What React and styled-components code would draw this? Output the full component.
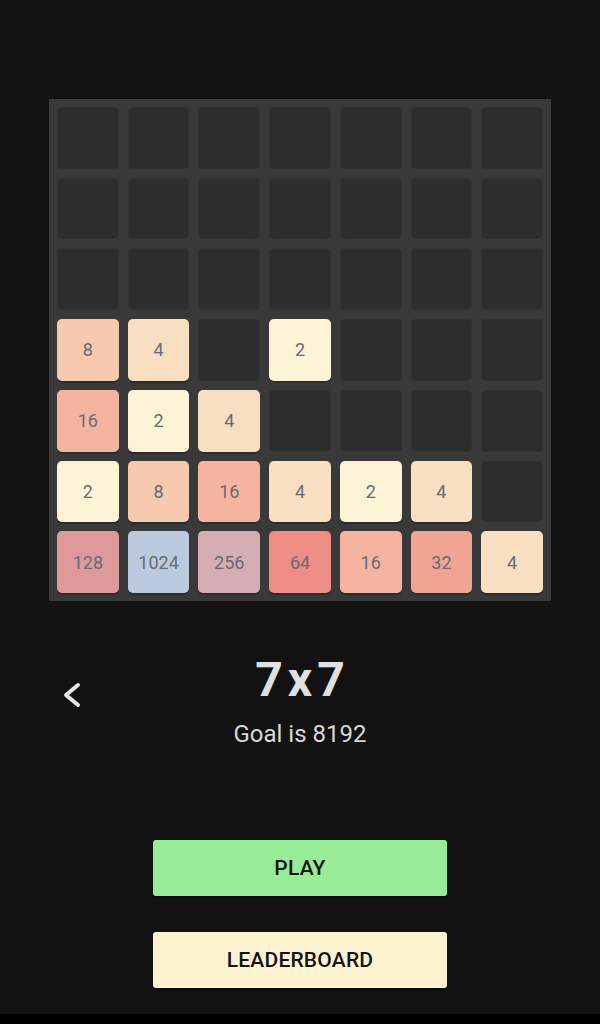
import styled, { createGlobalStyle } from 'styled-components';

const GlobalStyle = createGlobalStyle`
  html, body {
    margin: 0;
    padding: 0;
    background-color: #121212;
  }
  body {
    font-family: Roboto, 'Noto Sans', sans-serif;
  }
`;

const TILE_COLORS = {
  2: '#fcf4d4',
  4: '#f9dfc1',
  8: '#f7c9ae',
  16: '#f4b4a0',
  32: '#f2a493',
  64: '#ef8e85',
  128: '#de9a9a',
  256: '#d5adb5',
  1024: '#bccadf',
};

const BOARD = [
  [0, 0, 0, 0, 0, 0, 0],
  [0, 0, 0, 0, 0, 0, 0],
  [0, 0, 0, 0, 0, 0, 0],
  [8, 4, 0, 2, 0, 0, 0],
  [16, 2, 4, 0, 0, 0, 0],
  [2, 8, 16, 4, 2, 4, 0],
  [128, 1024, 256, 64, 16, 32, 4],
];

const Screen = styled.div`
  min-height: 100vh;
  display: flex;
  flex-direction: column;
  align-items: center;
  padding-top: 99px;
  box-sizing: border-box;
`;

const Board = styled.div`
  width: 502px;
  height: 502px;
  box-sizing: border-box;
  padding: 8px;
  background-color: #393939;
  display: grid;
  grid-template-columns: repeat(7, 1fr);
  grid-template-rows: repeat(7, 1fr);
  gap: 9px;
`;

const Cell = styled.div`
  border-radius: 5px;
  display: flex;
  align-items: center;
  justify-content: center;
  font-size: 18px;
  color: #676b76;
  background-color: ${({ $value }) => TILE_COLORS[$value] || '#2d2d2d'};
  box-shadow: ${({ $value }) =>
    $value ? '0 2px 0 rgba(0, 0, 0, 0.22)' : 'inset 0 0 0 1px #323232'};
`;

const Info = styled.section`
  width: 100%;
  margin-top: 51px;
  display: grid;
  grid-template-columns: 1fr auto 1fr;
  align-items: start;
`;

const BackButton = styled.button`
  justify-self: start;
  margin: 30px 0 0 62px;
  padding: 0;
  border: none;
  background: none;
  display: flex;
  cursor: pointer;
`;

const Titles = styled.div`
  display: flex;
  flex-direction: column;
  align-items: center;
  gap: 12px;
`;

const Size = styled.h1`
  margin: 0;
  font-size: 48px;
  line-height: 56px;
  font-weight: 700;
  letter-spacing: 5px;
  margin-right: -5px;
  color: #e0e0e0;
`;

const Goal = styled.p`
  margin: 0;
  font-size: 24px;
  line-height: 28px;
  color: #d8d8d8;
`;

const Actions = styled.div`
  margin-top: 92px;
  display: flex;
  flex-direction: column;
  gap: 36px;
`;

const ActionButton = styled.button`
  width: 294px;
  height: 56px;
  border: none;
  border-radius: 3px;
  background-color: ${({ $tone }) => ($tone === 'play' ? '#98ec98' : '#fdf3d0')};
  color: #141414;
  font-family: Roboto, sans-serif;
  font-size: 21px;
  font-weight: 500;
  letter-spacing: 0.2px;
  box-shadow: 0 2px 2px rgba(0, 0, 0, 0.4);
  cursor: pointer;
`;

const NavStrip = styled.div`
  margin-top: auto;
  width: 100%;
  height: 10px;
  background-color: #000;
`;

function ChevronLeft() {
  return (
    <svg width="20" height="26" viewBox="0 0 20 26" fill="none">
      <polyline
        points="16,3 4,13 16,23"
        stroke="#e6e6e6"
        strokeWidth="4"
        strokeLinecap="round"
        strokeLinejoin="round"
      />
    </svg>
  );
}

export default function App() {
  return (
    <>
      <GlobalStyle />
      <Screen>
        <Board>
          {BOARD.flat().map((value, i) => (
            <Cell key={i} $value={value}>
              {value || ''}
            </Cell>
          ))}
        </Board>

        <Info>
          <BackButton aria-label="Back">
            <ChevronLeft />
          </BackButton>
          <Titles>
            <Size>7x7</Size>
            <Goal>Goal is 8192</Goal>
          </Titles>
        </Info>

        <Actions>
          <ActionButton $tone="play">PLAY</ActionButton>
          <ActionButton $tone="board">LEADERBOARD</ActionButton>
        </Actions>

        <NavStrip />
      </Screen>
    </>
  );
}
